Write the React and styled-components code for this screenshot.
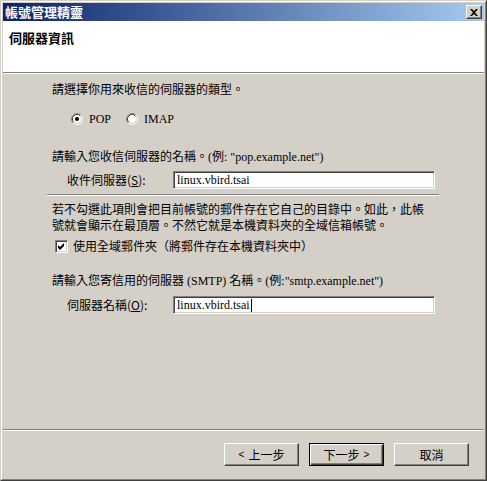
import React from 'react';
import styled, { createGlobalStyle } from 'styled-components';

const GlobalStyle = createGlobalStyle`
    html, body {
        margin: 0;
        padding: 0;
        background: #d4d0c8;
    }
    body {
        font-family: "Liberation Serif", "Noto Sans CJK TC", serif;
        font-size: 12px;
        color: #000;
    }
`;

const Window = styled.div`
    width: 487px;
    height: 481px;
    box-sizing: border-box;
    border: 1px solid;
    border-color: #d4d0c8 #404040 #404040 #d4d0c8;
    background: #d4d0c8;
`;

const Frame = styled.div`
    height: 100%;
    box-sizing: border-box;
    border: 1px solid;
    border-color: #ffffff #808080 #808080 #ffffff;
    padding: 1px;
    display: flex;
    flex-direction: column;
`;

const TitleBar = styled.div`
    height: 18px;
    flex-shrink: 0;
    display: flex;
    align-items: center;
    justify-content: space-between;
    padding: 0 2px 0 2px;
    background: linear-gradient(to right, #0a246a, #a6caf0);
`;

const TitleText = styled.span`
    color: #fff;
    font-family: "Noto Sans CJK TC", sans-serif;
    font-weight: bold;
    font-size: 13px;
    line-height: 16px;
`;

const CloseButton = styled.div`
    width: 16px;
    height: 14px;
    box-sizing: border-box;
    border: 1px solid;
    border-color: #ffffff #404040 #404040 #ffffff;
    box-shadow: inset -1px -1px #808080;
    background: #d4d0c8;
    display: flex;
    align-items: center;
    justify-content: center;
`;

const Header = styled.div`
    height: 51px;
    flex-shrink: 0;
    box-sizing: border-box;
    background: #fff;
    padding: 9px 6px 0;
`;

const HeaderTitle = styled.div`
    font-family: "Noto Sans CJK TC", sans-serif;
    font-weight: bold;
    font-size: 13px;
    line-height: 16px;
`;

const Rule = styled.div`
    flex-shrink: 0;
    height: 0;
    border-top: 1px solid #808080;
    border-bottom: 1px solid #ffffff;
    margin: ${(p) => p.$margin || '0'};
    width: ${(p) => p.$width || 'auto'};
`;

const Body = styled.div`
    height: 355px;
    flex-shrink: 0;
    box-sizing: border-box;
    padding: 8px 0 0 49px;
    display: flex;
    flex-direction: column;
`;

const Line = styled.div`
    line-height: 16px;
    white-space: nowrap;
    margin-top: ${(p) => p.$top || 0}px;
`;

const OptionRow = styled.div`
    display: flex;
    align-items: center;
    height: 16px;
    margin-top: ${(p) => p.$top || 0}px;
    padding-left: ${(p) => p.$indent || 0}px;
`;

const RadioOption = styled.label`
    display: flex;
    align-items: center;
    gap: 6px;
    margin-right: 15px;
`;

const CheckBox = styled.div`
    width: 13px;
    height: 13px;
    box-sizing: border-box;
    border: 1px solid;
    border-color: #808080 #ffffff #ffffff #808080;
    box-shadow: inset 1px 1px #404040, inset -1px -1px #d4d0c8;
    background: #fff;
    display: flex;
    align-items: center;
    justify-content: center;
    margin-right: 5px;
`;

const FieldRow = styled.div`
    display: flex;
    align-items: center;
    margin-top: ${(p) => p.$top || 0}px;
    padding-left: 15px;
`;

const FieldLabel = styled.span`
    width: 106px;
    flex-shrink: 0;
    line-height: 16px;
    font-family: "Noto Sans CJK TC", sans-serif;
`;

const Field = styled.div`
    width: 262px;
    height: 18px;
    box-sizing: border-box;
    border: 1px solid;
    border-color: #808080 #ffffff #ffffff #808080;
    box-shadow: inset 1px 1px #404040, inset -1px -1px #d4d0c8;
    background: #fff;
    padding: 0 3px;
    display: flex;
    align-items: center;
    line-height: 14px;
`;

const Caret = styled.span`
    display: inline-block;
    width: 1px;
    height: 13px;
    background: #000;
    margin-left: 1px;
`;

const ButtonRow = styled.div`
    flex: 1;
    display: flex;
    justify-content: flex-end;
    align-items: flex-start;
    gap: 10px;
    padding: 12px 15px 0 0;
`;

const Button = styled.div`
    width: 75px;
    height: 23px;
    box-sizing: border-box;
    border: 1px solid;
    border-color: ${(p) => (p.$default ? '#000' : '#ffffff #404040 #404040 #ffffff')};
    box-shadow: ${(p) =>
        p.$default
            ? 'inset 1px 1px #ffffff, inset -1px -1px #404040, inset -2px -2px #808080'
            : 'inset -1px -1px #808080'};
    background: #d4d0c8;
    display: flex;
    align-items: center;
    justify-content: center;
    gap: 4px;
    font-family: "Noto Sans CJK TC", sans-serif;
    line-height: 16px;
`;

const Arrow = styled.span`
    font-family: "Liberation Sans", sans-serif;
    font-size: 10px;
`;

const Radio = ({ checked }) => (
    <svg width="12" height="12" viewBox="0 0 12 12">
        <circle cx="6" cy="6" r="4.5" fill="#fff" />
        <path d="M2.11 9.89 A5.5 5.5 0 0 1 9.89 2.11" stroke="#808080" fill="none" />
        <path d="M9.89 2.11 A5.5 5.5 0 0 1 2.11 9.89" stroke="#ffffff" fill="none" />
        <path d="M2.82 9.18 A4.5 4.5 0 0 1 9.18 2.82" stroke="#404040" fill="none" />
        <path d="M9.18 2.82 A4.5 4.5 0 0 1 2.82 9.18" stroke="#d4d0c8" fill="none" />
        {checked && <circle cx="6" cy="6" r="2" fill="#000" />}
    </svg>
);

const App = () => {
    return (
        <>
            <GlobalStyle />
            <Window>
                <Frame>
                    <TitleBar>
                        <TitleText>帳號管理精靈</TitleText>
                        <CloseButton>
                            <svg width="8" height="7" viewBox="0 0 8 7">
                                <path d="M0 0h2l2 2 2-2h2L5 3.5 8 7H6L4 5 2 7H0l3-3.5z" fill="#000" />
                            </svg>
                        </CloseButton>
                    </TitleBar>
                    <Header>
                        <HeaderTitle>伺服器資訊</HeaderTitle>
                    </Header>
                    <Rule />
                    <Body>
                        <Line>請選擇你用來收信的伺服器的類型。</Line>
                        <OptionRow $top={13} $indent={19}>
                            <RadioOption>
                                <Radio checked />
                                POP
                            </RadioOption>
                            <RadioOption>
                                <Radio />
                                IMAP
                            </RadioOption>
                        </OptionRow>
                        <Line $top={22}>請輸入您收信伺服器的名稱。(例: "pop.example.net")</Line>
                        <FieldRow $top={6}>
                            <FieldLabel>
                                收件伺服器(<u>S</u>):
                            </FieldLabel>
                            <Field>linux.vbird.tsai</Field>
                        </FieldRow>
                        <Rule $margin="5px 0 0 -5px" $width="392px" />
                        <Line $top={6}>
                            若不勾選此項則會把目前帳號的郵件存在它自己的目錄中。如此，此帳
                            <br />
                            號就會顯示在最頂層。不然它就是本機資料夾的全域信箱帳號。
                        </Line>
                        <OptionRow $top={4} $indent={3}>
                            <CheckBox>
                                <svg width="7" height="7" viewBox="0 0 7 7">
                                    <path d="M0 2 L2 4 L6 0 L6 3 L2 7 L0 5 Z" fill="#000" />
                                </svg>
                            </CheckBox>
                            使用全域郵件夾（將郵件存在本機資料夾中）
                        </OptionRow>
                        <Line $top={19}>請輸入您寄信用的伺服器 (SMTP) 名稱。(例:"smtp.example.net")</Line>
                        <FieldRow $top={7}>
                            <FieldLabel>
                                伺服器名稱(<u>O</u>):
                            </FieldLabel>
                            <Field>
                                linux.vbird.tsai
                                <Caret />
                            </Field>
                        </FieldRow>
                    </Body>
                    <Rule />
                    <ButtonRow>
                        <Button>
                            <Arrow>&lt;</Arrow>上一步
                        </Button>
                        <Button $default>
                            下一步<Arrow>&gt;</Arrow>
                        </Button>
                        <Button>取消</Button>
                    </ButtonRow>
                </Frame>
            </Window>
        </>
    );
};

export default App;
